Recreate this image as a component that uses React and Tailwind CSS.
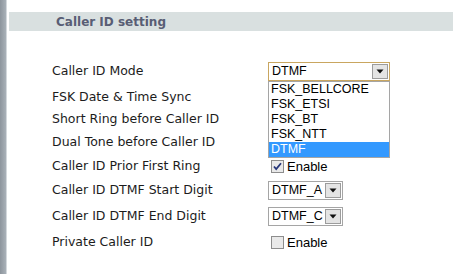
import React from 'react'

const OPTIONS = ['FSK_BELLCORE', 'FSK_ETSI', 'FSK_BT', 'FSK_NTT', 'DTMF']

function Arrow() {
  return (
    <div className="w-[16px] h-[15px] bg-[#e4e4e4] border border-[#9c9c9c] flex items-center justify-center shrink-0">
      <svg width="8" height="5" viewBox="0 0 8 5">
        <path d="M0.5 0.5h7L4 4.5z" fill="#111" />
      </svg>
    </div>
  )
}

function Select({ value, width, focused }) {
  return (
    <div
      className={`h-[19px] flex items-center justify-between pl-[3px] pr-[1px] bg-white border ${
        focused ? 'border-[#c9a660]' : 'border-[#a5a5a5]'
      } ${width}`}
    >
      <span className="text-[12.5px] text-black font-['Liberation_Sans',Arial,sans-serif] leading-none">{value}</span>
      <Arrow />
    </div>
  )
}

function Checkbox({ checked }) {
  return (
    <div className="w-[13px] h-[13px] border border-[#8d8d8d] bg-[#e9e9e9] flex items-center justify-center ml-[3px] shrink-0">
      {checked && (
        <svg width="9" height="9" viewBox="0 0 9 9">
          <path d="M1 4.5l2.2 2.5L8 1.2" stroke="#26367a" strokeWidth="1.8" fill="none" />
        </svg>
      )}
    </div>
  )
}

function Enable({ checked }) {
  return (
    <div className="flex items-center gap-[3px]">
      <Checkbox checked={checked} />
      <span className="text-[13px] text-black font-['Liberation_Sans',Arial,sans-serif] leading-none">Enable</span>
    </div>
  )
}

function Row({ label, h, children }) {
  return (
    <div className={`flex items-center ${h}`}>
      <div className="w-[216px] text-[12.5px] text-[#1c1c1c] font-['DejaVu_Sans',Verdana,sans-serif]">{label}</div>
      <div className="relative">{children}</div>
    </div>
  )
}

export default function App() {
  return (
    <div className="flex w-[453px] h-[274px] bg-white overflow-hidden">
      <div className="w-[6px] bg-gradient-to-r from-[#8d959d] to-[#a9b1b8]" />
      <div className="w-[1px] bg-[#d3d8dc]" />
      <div className="flex-1 pl-[2px] pt-[12px]">
        <div className="h-[19px] bg-[#d9e0e0] flex items-center pl-[47px]">
          <span className="text-[12px] font-bold text-[#585d74] font-['DejaVu_Sans',Verdana,sans-serif]">Caller ID setting</span>
        </div>
        <div className="pl-[43px] pt-[28px]">
          <Row label="Caller ID Mode" h="h-[24px]">
            <Select value="DTMF" width="w-[122px]" focused />
            <div className="absolute left-0 top-[19px] w-[122px] border border-[#a5a5a5] bg-white z-10">
              {OPTIONS.map((o) => (
                <div
                  key={o}
                  className={`h-[15px] pl-[2px] flex items-center text-[12.5px] leading-none font-['Liberation_Sans',Arial,sans-serif] ${
                    o === 'DTMF' ? 'bg-[#3399ff] text-white' : 'text-black'
                  }`}
                >
                  {o}
                </div>
              ))}
            </div>
          </Row>
          <Row label="FSK Date & Time Sync" h="h-[28px]" />
          <Row label="Short Ring before Caller ID" h="h-[16px]" />
          <Row label="Dual Tone before Caller ID" h="h-[30px]" />
          <Row label="Caller ID Prior First Ring" h="h-[18px]">
            <Enable checked />
          </Row>
          <Row label="Caller ID DTMF Start Digit" h="h-[30px]">
            <Select value="DTMF_A" width="w-[75px]" />
          </Row>
          <Row label="Caller ID DTMF End Digit" h="h-[22px]">
            <Select value="DTMF_C" width="w-[75px]" />
          </Row>
          <Row label="Private Caller ID" h="h-[30px]">
            <Enable />
          </Row>
        </div>
      </div>
    </div>
  )
}
